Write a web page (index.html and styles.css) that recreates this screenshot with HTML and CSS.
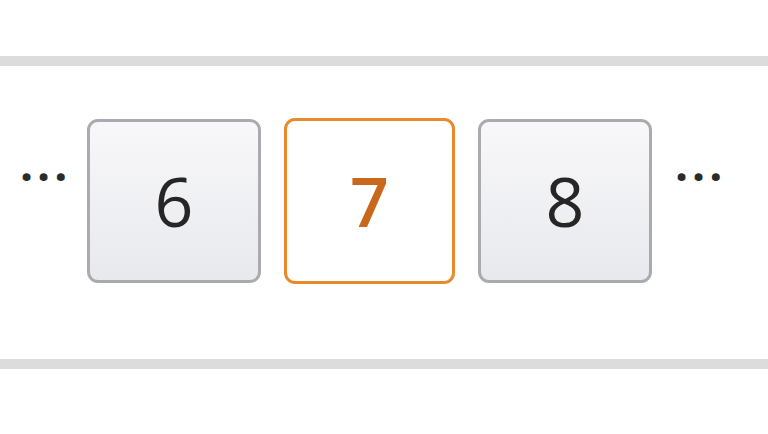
FILE: index.html
```html
<!DOCTYPE html>
<html>
<head>
<meta charset="utf-8">
<link rel="stylesheet" href="styles.css">
</head>
<body>
<div class="page">
  <div class="rule"></div>
  <nav class="pager">
    <span class="dots">...</span>
    <a class="page-btn">6</a>
    <a class="page-btn current">7</a>
    <a class="page-btn">8</a>
    <span class="dots">...</span>
  </nav>
  <div class="rule"></div>
</div>
</body>
</html>
```
FILE: styles.css
```css
html, body {
  margin: 0;
  padding: 0;
  background: #ffffff;
}
.page {
  width: 768px;
  height: 434px;
  padding-top: 56px;
  box-sizing: border-box;
  display: flex;
  flex-direction: column;
}
.rule {
  height: 10px;
  background: #dcdcdc;
}
.pager {
  height: 293px;
  box-sizing: border-box;
  padding: 53px 0 0 20px;
  display: flex;
  align-items: flex-start;
  gap: 23px;
  font-family: "Open Sans", "DejaVu Sans", sans-serif;
}
.dots {
  width: 44px;
  margin-top: 21px;
  font-size: 46px;
  font-weight: 700;
  line-height: 46px;
  letter-spacing: 4px;
  color: #2b2b2b;
  white-space: nowrap;
}
.page-btn {
  width: 174px;
  height: 164px;
  box-sizing: border-box;
  border: 3px solid #a9abb0;
  border-radius: 11px;
  background: linear-gradient(#f8f8fa, #e8e9ed);
  display: flex;
  align-items: center;
  justify-content: center;
  font-size: 68px;
  color: #262626;
  line-height: 1;
}
.page-btn.current {
  width: 171px;
  height: 166px;
  margin-top: -1px;
  border-color: #e9892b;
  background: #ffffff;
  color: #c9671d;
  font-weight: 600;
}
```
